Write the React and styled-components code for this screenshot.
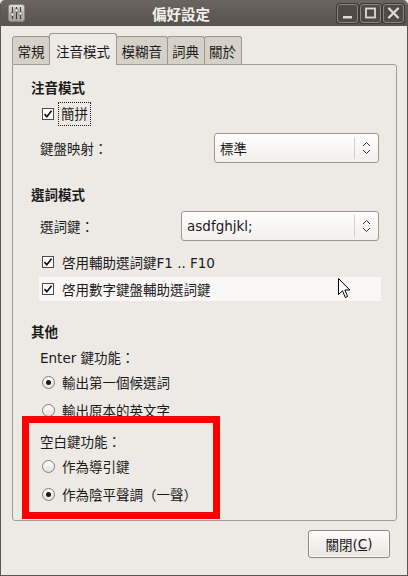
import React from "react";
import styled, { createGlobalStyle } from "styled-components";

const GlobalStyle = createGlobalStyle`
  html, body {
    margin: 0;
    padding: 0;
    background: #edeae5;
  }
  body {
    font-family: "DejaVu Sans", "Noto Sans CJK TC", sans-serif;
    text-spacing-trim: space-all;
  }
`;

const Window = styled.div`
  position: relative;
  width: 408px;
  height: 576px;
  box-sizing: border-box;
  display: flex;
  flex-direction: column;
  background: #edeae5;
  border: 1px solid #5b5752;
  border-top: none;
  border-radius: 5px 5px 0 0;
  overflow: hidden;
  font-size: 13.5px;
  color: #1a1a1a;
`;

const TitleBar = styled.div`
  height: 26px;
  flex: none;
  display: flex;
  align-items: center;
  padding: 0 3px 0 7px;
  background: linear-gradient(#6a655f, #57524d);
  color: #f2f0ec;
`;

const Title = styled.div`
  flex: 1;
  text-align: center;
  font-weight: bold;
  font-size: 14.5px;
`;

const WinButtons = styled.div`
  display: flex;
  gap: 2px;
`;

const WinButton = styled.div`
  width: 21px;
  height: 19px;
  box-sizing: border-box;
  border: 1px solid #8d8781;
  border-radius: 3px;
  background: #4f4a45;
  box-shadow: 0 0 0 1px #3d3935;
  display: flex;
  align-items: center;
  justify-content: center;
`;

const Body = styled.div`
  flex: 1;
  display: flex;
  flex-direction: column;
  padding: 7px 10px 0 11px;
`;

const Tabs = styled.div`
  display: flex;
  height: 32px;
  position: relative;
  z-index: 1;
`;

const Tab = styled.div`
  box-sizing: border-box;
  height: ${(p) => (p.$active ? 32 : 28)}px;
  margin-top: ${(p) => (p.$active ? 0 : 3)}px;
  margin-left: ${(p) => (p.$first ? 0 : -1)}px;
  padding: ${(p) => (p.$active ? "3px 6px 0" : "0 4.5px")};
  display: flex;
  align-items: center;
  border: 1px solid #9d978e;
  border-bottom: none;
  border-radius: 3px 3px 0 0;
  background: ${(p) => (p.$active ? "#edeae5" : "#d6d1c8")};
  position: relative;
  z-index: ${(p) => (p.$active ? 2 : 1)};
`;

const Panel = styled.div`
  height: 457px;
  margin-top: -1px;
  box-sizing: border-box;
  border: 1px solid #a29d94;
  border-radius: 0 3px 3px 3px;
  padding: 14px 17px 0 18px;
  display: flex;
  flex-direction: column;
`;

const SectionTitle = styled.div`
  height: 18px;
  line-height: 18px;
  font-weight: bold;
  margin-top: ${(p) => p.$mt || 0}px;
`;

const LabelRow = styled.div`
  display: flex;
  align-items: center;
  height: ${(p) => p.$h || 24}px;
  margin-top: ${(p) => p.$mt || 0}px;
  padding-left: 9px;
`;

const OptionRow = styled.div`
  display: flex;
  align-items: center;
  height: ${(p) => p.$h || 24}px;
  margin: ${(p) => p.$mt || 0}px -2px 0 8px;
  padding-left: 3px;
  background: ${(p) => (p.$hover ? "#f9f8f6" : "transparent")};
`;

const Check = styled.span`
  width: 12px;
  height: 12px;
  box-sizing: border-box;
  border: 1px solid #4d4a46;
  background: #fff;
  margin-right: 8px;
  display: flex;
  align-items: center;
  justify-content: center;
  flex: none;
`;

const Radio = styled.span`
  width: 13px;
  height: 13px;
  box-sizing: border-box;
  border-radius: 50%;
  border: 1px solid #807a74;
  background: linear-gradient(#ffffff, #e4e1db);
  margin-right: 7px;
  display: flex;
  align-items: center;
  justify-content: center;
  flex: none;

  &::after {
    content: "";
    width: 5px;
    height: 5px;
    border-radius: 50%;
    background: ${(p) => (p.$on ? "#1a1a1a" : "transparent")};
  }
`;

const FocusLabel = styled.span`
  margin-left: -4px;
  padding: 0 2px;
  line-height: 22px;
  border: 1px dotted #1a1a1a;
`;

const Combo = styled.div`
  margin-left: auto;
  width: ${(p) => p.$w}px;
  height: 30px;
  box-sizing: border-box;
  display: flex;
  align-items: center;
  border: 1px solid #9c968c;
  border-radius: 3px;
  background: linear-gradient(#fefefe, #f2f0ec);
  padding-left: 5px;
`;

const ComboText = styled.span`
  flex: 1;
`;

const ComboSep = styled.span`
  width: 1px;
  height: 22px;
  background: #d3cfc8;
`;

const ComboArrow = styled.span`
  width: 23px;
  display: flex;
  justify-content: center;
`;

const Group = styled.div`
  position: relative;
  margin-top: 7px;

  &::after {
    content: "";
    position: absolute;
    top: -13px;
    bottom: -13px;
    left: -9px;
    width: 198px;
    box-sizing: border-box;
    border: 7px solid #ff0000;
    pointer-events: none;
  }
`;

const Footer = styled.div`
  display: flex;
  justify-content: flex-end;
  padding: 9px 7px 0 0;
`;

const CloseButton = styled.div`
  width: 82px;
  height: 28px;
  box-sizing: border-box;
  border: 1px solid #8d877e;
  border-radius: 3px;
  background: linear-gradient(#fcfbfa, #e9e6e0);
  box-shadow: inset 0 0 0 1px #fbfaf8;
  display: flex;
  align-items: center;
  justify-content: center;
`;

const Cursor = styled.svg`
  position: absolute;
  left: 337px;
  top: 278px;
`;

const AppIcon = () => (
  <svg width="17" height="18" viewBox="0 0 17 18">
    <defs>
      <linearGradient id="ai" x1="0" y1="0" x2="0" y2="1">
        <stop offset="0" stopColor="#e2dfda" />
        <stop offset="1" stopColor="#a19e99" />
      </linearGradient>
    </defs>
    <rect x="0.5" y="0.5" width="16" height="17" rx="2.5" fill="url(#ai)" stroke="#8a8782" />
    <path d="M4.5 3v12M8.5 3v12M12.5 3v12" stroke="#3e3c39" strokeWidth="1.2" />
    <rect x="3" y="9" width="3" height="3" fill="#fafafa" stroke="#555" strokeWidth="0.6" />
    <rect x="7" y="5" width="3" height="3" fill="#fafafa" stroke="#555" strokeWidth="0.6" />
    <rect x="11" y="8" width="3" height="3" fill="#fafafa" stroke="#555" strokeWidth="0.6" />
  </svg>
);

const MinIcon = () => (
  <svg width="19" height="17" viewBox="0 0 19 17">
    <rect x="5" y="11" width="9" height="2.5" fill="#dedad4" />
  </svg>
);

const MaxIcon = () => (
  <svg width="19" height="17" viewBox="0 0 19 17">
    <rect x="5" y="3.5" width="9" height="9" fill="none" stroke="#dedad4" strokeWidth="1.8" />
  </svg>
);

const CloseIcon = () => (
  <svg width="19" height="17" viewBox="0 0 19 17">
    <path d="M5 3.5l9 9M14 3.5l-9 9" stroke="#dedad4" strokeWidth="2.4" strokeLinecap="round" />
  </svg>
);

const Tick = () => (
  <svg width="10" height="10" viewBox="0 0 10 10">
    <path d="M1.5 5.2l2.3 2.5L8.6 1.8" fill="none" stroke="#111" strokeWidth="1.7" />
  </svg>
);

const Updown = () => (
  <svg width="9" height="14" viewBox="0 0 9 14">
    <path d="M1 5l3.5-3.5L8 5M1 9l3.5 3.5L8 9" fill="none" stroke="#333" strokeWidth="1" />
  </svg>
);

export default function App() {
  return (
    <>
      <GlobalStyle />
      <Window>
        <TitleBar>
          <AppIcon />
          <Title>偏好設定</Title>
          <WinButtons>
            <WinButton><MinIcon /></WinButton>
            <WinButton><MaxIcon /></WinButton>
            <WinButton><CloseIcon /></WinButton>
          </WinButtons>
        </TitleBar>
        <Body>
          <Tabs>
            <Tab $first>常規</Tab>
            <Tab $active>注音模式</Tab>
            <Tab>模糊音</Tab>
            <Tab>詞典</Tab>
            <Tab>關於</Tab>
          </Tabs>
          <Panel>
            <SectionTitle>注音模式</SectionTitle>
            <OptionRow $mt={4} $h={26}>
              <Check><Tick /></Check>
              <FocusLabel>簡拼</FocusLabel>
            </OptionRow>
            <LabelRow $mt={6} $h={30}>
              鍵盤映射：
              <Combo $w={165}>
                <ComboText>標準</ComboText>
                <ComboSep />
                <ComboArrow><Updown /></ComboArrow>
              </Combo>
            </LabelRow>

            <SectionTitle $mt={23}>選詞模式</SectionTitle>
            <LabelRow $mt={7} $h={30}>
              選詞鍵：
              <Combo $w={198}>
                <ComboText>asdfghjkl;</ComboText>
                <ComboSep />
                <ComboArrow><Updown /></ComboArrow>
              </Combo>
            </LabelRow>
            <OptionRow $mt={9}>
              <Check><Tick /></Check>
              啓用輔助選詞鍵F1 .. F10
            </OptionRow>
            <OptionRow $mt={3} $hover>
              <Check><Tick /></Check>
              啓用數字鍵盤輔助選詞鍵
            </OptionRow>

            <SectionTitle $mt={22}>其他</SectionTitle>
            <LabelRow $mt={4}>Enter 鍵功能：</LabelRow>
            <OptionRow $mt={1}>
              <Radio $on />
              輸出第一個候選詞
            </OptionRow>
            <OptionRow $mt={4}>
              <Radio />
              輸出原本的英文字
            </OptionRow>
            <Group>
              <LabelRow>空白鍵功能：</LabelRow>
              <OptionRow $mt={1}>
                <Radio />
                作為導引鍵
              </OptionRow>
              <OptionRow $mt={4}>
                <Radio $on />
                作為陰平聲調（一聲）
              </OptionRow>
            </Group>
          </Panel>
          <Footer>
            <CloseButton>
              關閉(<u>C</u>)
            </CloseButton>
          </Footer>
        </Body>
        <Cursor width="13" height="21" viewBox="0 0 13 21">
          <path
            d="M0.5 0.5L0.5 16.5L4.5 12.8L7.3 19.5L9.6 18.5L6.9 12L11.8 12Z"
            fill="#fff"
            stroke="#000"
            strokeWidth="1"
            strokeLinejoin="round"
          />
        </Cursor>
      </Window>
    </>
  );
}
